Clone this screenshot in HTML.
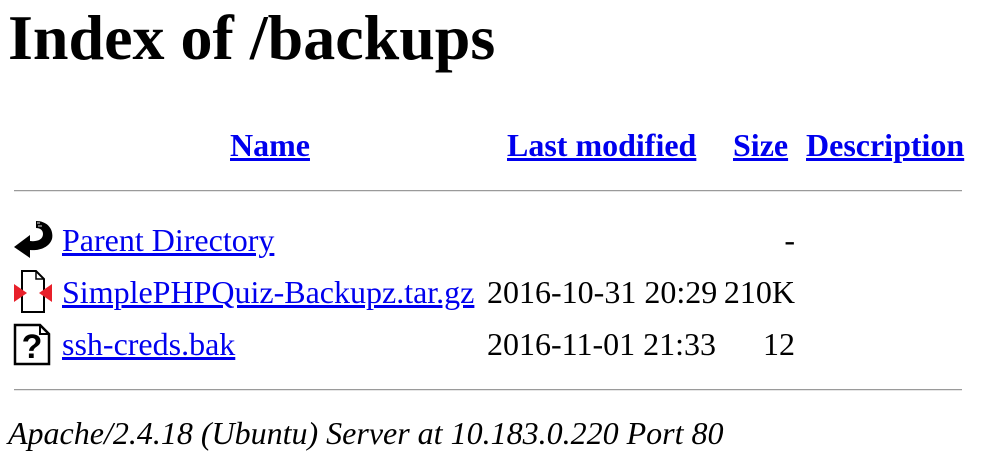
<!DOCTYPE html>
<html><head><meta charset="utf-8"><style>
body{margin:0;width:988px;height:458px;background:#fff;font-family:"Liberation Serif",serif;color:#000;position:relative;overflow:hidden}
.a{position:absolute;white-space:nowrap;font-size:32px;line-height:40px}
.r{right:193px;text-align:right}
a{color:#0000ee;text-decoration:underline}
h1{position:absolute;margin:0;left:8px;top:0;font-size:64px;line-height:76px;font-weight:bold}
.hr{position:absolute;left:14px;width:948px;height:1px;background:#9a9a9a;border-bottom:1px solid #e6e6e6}
b a{font-weight:bold}
</style></head><body>
<h1>Index of /backups</h1>
<div class="a" style="left:230px;top:125px"><b><a>Name</a></b></div>
<div class="a" style="left:507px;top:125px"><b><a>Last modified</a></b></div>
<div class="a" style="left:733px;top:125px"><b><a>Size</a></b></div>
<div class="a" style="left:806px;top:125px"><b><a>Description</a></b></div>
<div class="hr" style="top:190px"></div>

<svg style="position:absolute;left:12px;top:218px" width="44" height="46" viewBox="0 0 44 46">
<path d="M24 3 C36 3 42 12 40 21 C37 30 26 33 18 32 L18 40 L2 29 L18 17 L18 23 C26 24 31 21 31 16 C31 12 28 10 24 10 Z" fill="#000"/>
<path d="M25 5 L28 5 M26 8 L30 8" stroke="#999" stroke-width="1.5"/>
</svg>
<div class="a" style="left:62px;top:220px"><a>Parent Directory</a></div>
<div class="a r" style="top:220px">-</div>

<svg style="position:absolute;left:12px;top:269px" width="40" height="46" viewBox="0 0 40 46">
<path d="M10 2 L24 2 L32 10 L32 43 L10 43 Z" fill="#fff" stroke="#000" stroke-width="2"/>
<path d="M24 2 L24 10 L32 10" fill="none" stroke="#000" stroke-width="1.5"/>
<path d="M2 15 L15 24 L2 33 Z" fill="#e8202a"/>
<path d="M40 15 L27 24 L40 33 Z" fill="#e8202a"/>
</svg>
<div class="a" style="left:62px;top:272px"><a>SimplePHPQuiz-Backupz.tar.gz</a></div>
<div class="a" style="left:487px;top:272px">2016-10-31 20:29</div>
<div class="a r" style="top:272px">210K</div>

<svg style="position:absolute;left:12px;top:322px" width="40" height="46" viewBox="0 0 40 46">
<path d="M3 3 L28 3 L37 12 L37 42 L3 42 Z" fill="#fff" stroke="#000" stroke-width="2.5"/>
<path d="M28 3 L28 12 L37 12" fill="none" stroke="#000" stroke-width="2"/>
<text x="20" y="36" font-family="Liberation Sans" font-weight="bold" font-size="34" text-anchor="middle">?</text>
</svg>
<div class="a" style="left:62px;top:324px"><a>ssh-creds.bak</a></div>
<div class="a" style="left:487px;top:324px">2016-11-01 21:33</div>
<div class="a r" style="top:324px">12</div>

<div class="hr" style="top:389px"></div>
<div class="a" style="left:8px;top:413px;font-style:italic">Apache/2.4.18 (Ubuntu) Server at 10.183.0.220 Port 80</div>
</body></html>
